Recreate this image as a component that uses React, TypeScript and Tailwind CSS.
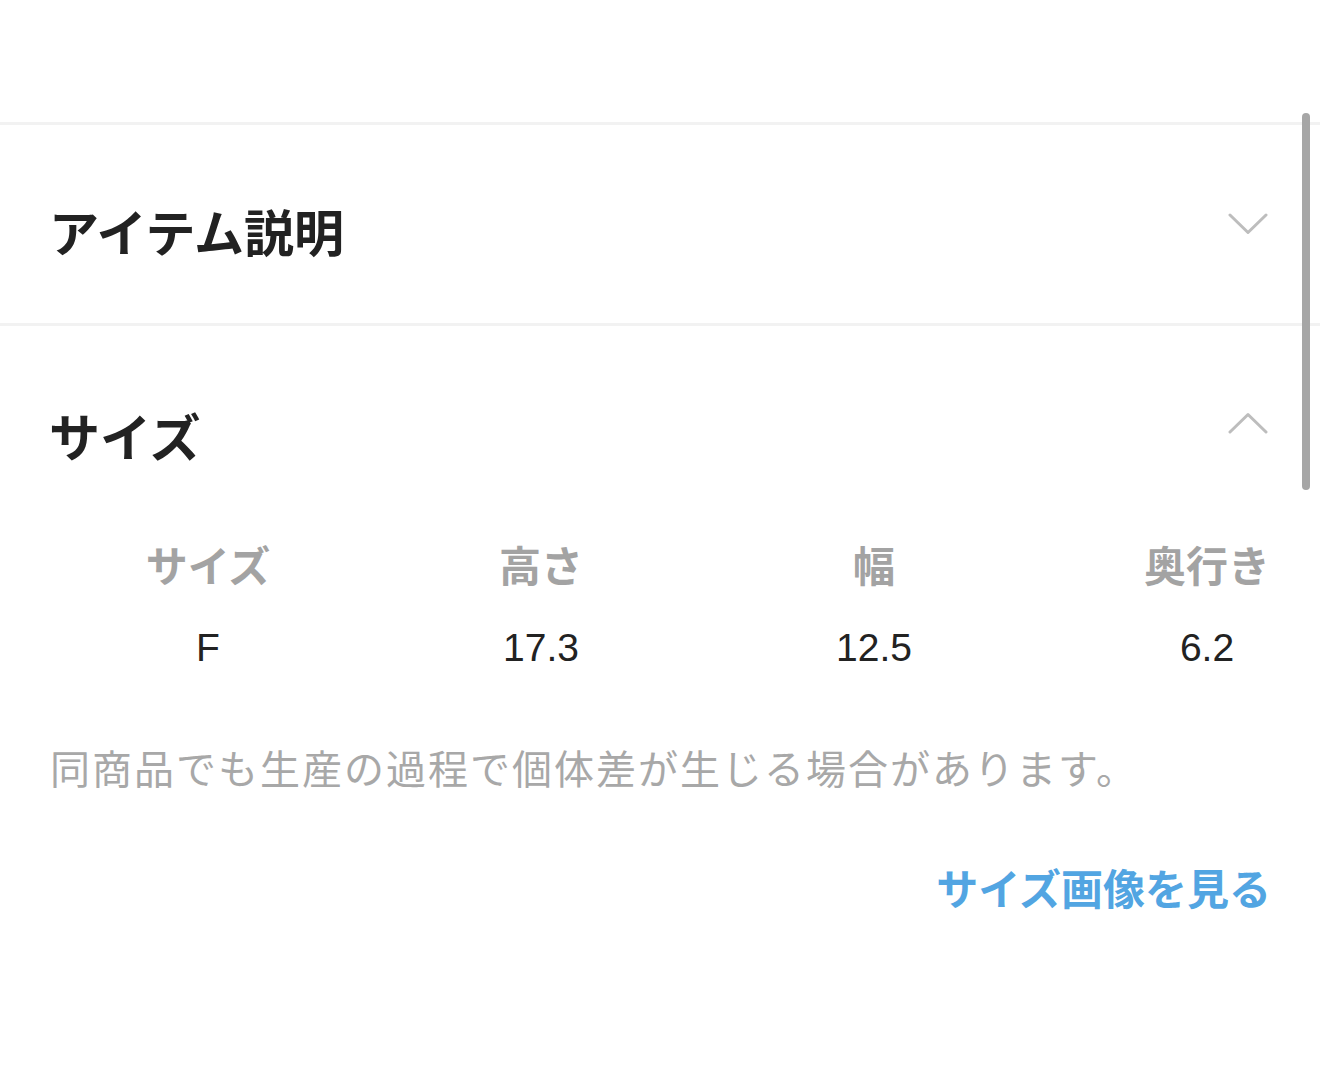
import React from "react";

const jp = { fontFamily: '"Noto Sans CJK JP", "Noto Sans", sans-serif' };
const num = { fontFamily: '"Liberation Sans", "Noto Sans CJK JP", sans-serif' };

function Chevron({ up }: { up?: boolean }) {
  return (
    <svg width="40" height="22" viewBox="0 0 40 22" fill="none" className="shrink-0">
      <path
        d={up ? "M2 20 L20 2.5 L38 20" : "M2 2 L20 19.5 L38 2"}
        stroke="#bdbdbd"
        strokeWidth="3"
        strokeLinecap="round"
        strokeLinejoin="round"
      />
    </svg>
  );
}

const headers = ["サイズ", "高さ", "幅", "奥行き"];
const values = ["F", "17.3", "12.5", "6.2"];

export default function App() {
  return (
    <div className="relative w-[1320px] h-[1073px] bg-white overflow-hidden" style={jp}>
      <div className="h-[122px]" />
      <div className="h-[3px] bg-[#f2f2f2]" />

      <div className="h-[198px] pl-[49px] pr-[52px] flex items-center justify-between">
        <h2 className="text-[50px] leading-[50px] font-bold text-[#222222] pt-[12px]">アイテム説明</h2>
        <div className="-mt-[1px]">
          <Chevron />
        </div>
      </div>

      <div className="h-[3px] bg-[#f2f2f2]" />

      <div className="pt-[84px] pl-[49px] pr-[52px] flex items-start justify-between">
        <h2 className="text-[51px] leading-[50px] font-bold text-[#222222]">サイズ</h2>
        <div className="mt-[2px]">
          <Chevron up />
        </div>
      </div>

      <div className="mt-[82px] pl-[118px] pr-[23px] flex justify-between">
        {headers.map((h) => (
          <div key={h} className="w-[180px] text-center text-[42px] leading-[44px] font-bold text-[#a3a3a3]">
            {h}
          </div>
        ))}
      </div>

      <div className="mt-[40px] pl-[118px] pr-[23px] flex justify-between" style={num}>
        {values.map((v) => (
          <div key={v} className="w-[180px] text-center text-[39px] leading-[44px] text-[#222222]">
            {v}
          </div>
        ))}
      </div>

      <p className="mt-[73px] px-[50px] text-[40px] leading-[48px] tracking-[2px] text-[#a8a8a8]">
        同商品でも生産の過程で個体差が生じる場合があります。
      </p>

      <div className="mt-[72px] pl-[50px] pr-[49px] flex justify-end">
        <a className="text-[42px] leading-[48px] font-bold text-[#52a5e2]">サイズ画像を見る</a>
      </div>

      <div className="absolute right-[10px] top-[113px] w-[8px] h-[377px] rounded-full bg-[#a6a6a6]" />
    </div>
  );
}
